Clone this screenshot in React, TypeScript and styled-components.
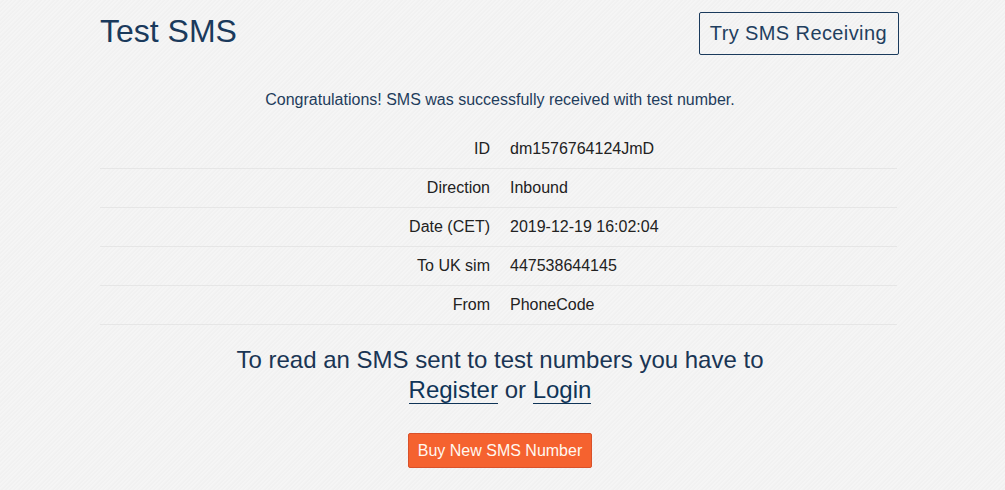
import React from "react";
import styled, { createGlobalStyle } from "styled-components";

interface Detail {
  label: string;
  value: string;
}

const details: Detail[] = [
  { label: "ID", value: "dm1576764124JmD" },
  { label: "Direction", value: "Inbound" },
  { label: "Date (CET)", value: "2019-12-19 16:02:04" },
  { label: "To UK sim", value: "447538644145" },
  { label: "From", value: "PhoneCode" },
];

const GlobalStyle = createGlobalStyle`
  body {
    margin: 0;
    font-family: "Liberation Sans", Arial, sans-serif;
    background-color: #f3f3f3;
    background-image: repeating-linear-gradient(
      135deg,
      #f5f5f5 0px,
      #f5f5f5 1px,
      #f1f1f1 2px,
      #f1f1f1 3px
    );
  }
`;

const Page = styled.div`
  width: 800px;
  margin: 0 100px;
  padding-top: 12px;
  padding-bottom: 22px;
`;

const Header = styled.div`
  display: flex;
  justify-content: space-between;
  align-items: flex-start;
`;

const Title = styled.h1`
  margin: 2px 0 0;
  font-size: 32px;
  line-height: 35px;
  font-weight: normal;
  color: #1a3a5c;
`;

const OutlineButton = styled.a`
  display: inline-block;
  margin-right: 1px;
  padding: 9px 11px 9px 10px;
  border: 1px solid #1a3a5c;
  border-radius: 2px;
  font-size: 20px;
  line-height: 23px;
  letter-spacing: 0.4px;
  color: #1f3f5f;
  text-decoration: none;
`;

const Notice = styled.p`
  margin: 35px 0 20px;
  text-align: center;
  font-size: 16px;
  line-height: 20px;
  color: #1f3d5c;
`;

const Table = styled.div`
  display: flex;
  flex-direction: column;
  padding-right: 3px;
`;

const Row = styled.div`
  display: grid;
  grid-template-columns: 398px 1fr;
  height: 38px;
  align-items: center;
  border-bottom: 1px solid #e6e6e6;
  font-size: 16px;
  color: #222;
`;

const Label = styled.div`
  text-align: right;
  padding-right: 8px;
`;

const Value = styled.div`
  padding-left: 12px;
`;

const Prompt = styled.p`
  margin: 20px 0 0;
  text-align: center;
  font-size: 24px;
  line-height: 30px;
  color: #1a3554;
`;

const PromptLink = styled.a`
  color: #0f3457;
  text-decoration: none;
  border-bottom: 1px solid #0f3457;
`;

const Actions = styled.div`
  display: flex;
  justify-content: center;
  margin-top: 28px;
`;

const BuyButton = styled.a`
  display: inline-block;
  padding: 6px 9px;
  background: #f5622f;
  border: 1px solid #d9512a;
  border-radius: 2px;
  font-size: 16px;
  line-height: 21px;
  color: #fff8ef;
  text-decoration: none;
`;

const App: React.FC = () => {
  return (
    <>
      <GlobalStyle />
      <Page>
        <Header>
          <Title>Test SMS</Title>
          <OutlineButton href="#">Try SMS Receiving</OutlineButton>
        </Header>
        <Notice>Congratulations! SMS was successfully received with test number.</Notice>
        <Table>
          {details.map((d) => (
            <Row key={d.label}>
              <Label>{d.label}</Label>
              <Value>{d.value}</Value>
            </Row>
          ))}
        </Table>
        <Prompt>
          To read an SMS sent to test numbers you have to
          <br />
          <PromptLink href="#">Register</PromptLink> or <PromptLink href="#">Login</PromptLink>
        </Prompt>
        <Actions>
          <BuyButton href="#">Buy New SMS Number</BuyButton>
        </Actions>
      </Page>
    </>
  );
};

export default App;
